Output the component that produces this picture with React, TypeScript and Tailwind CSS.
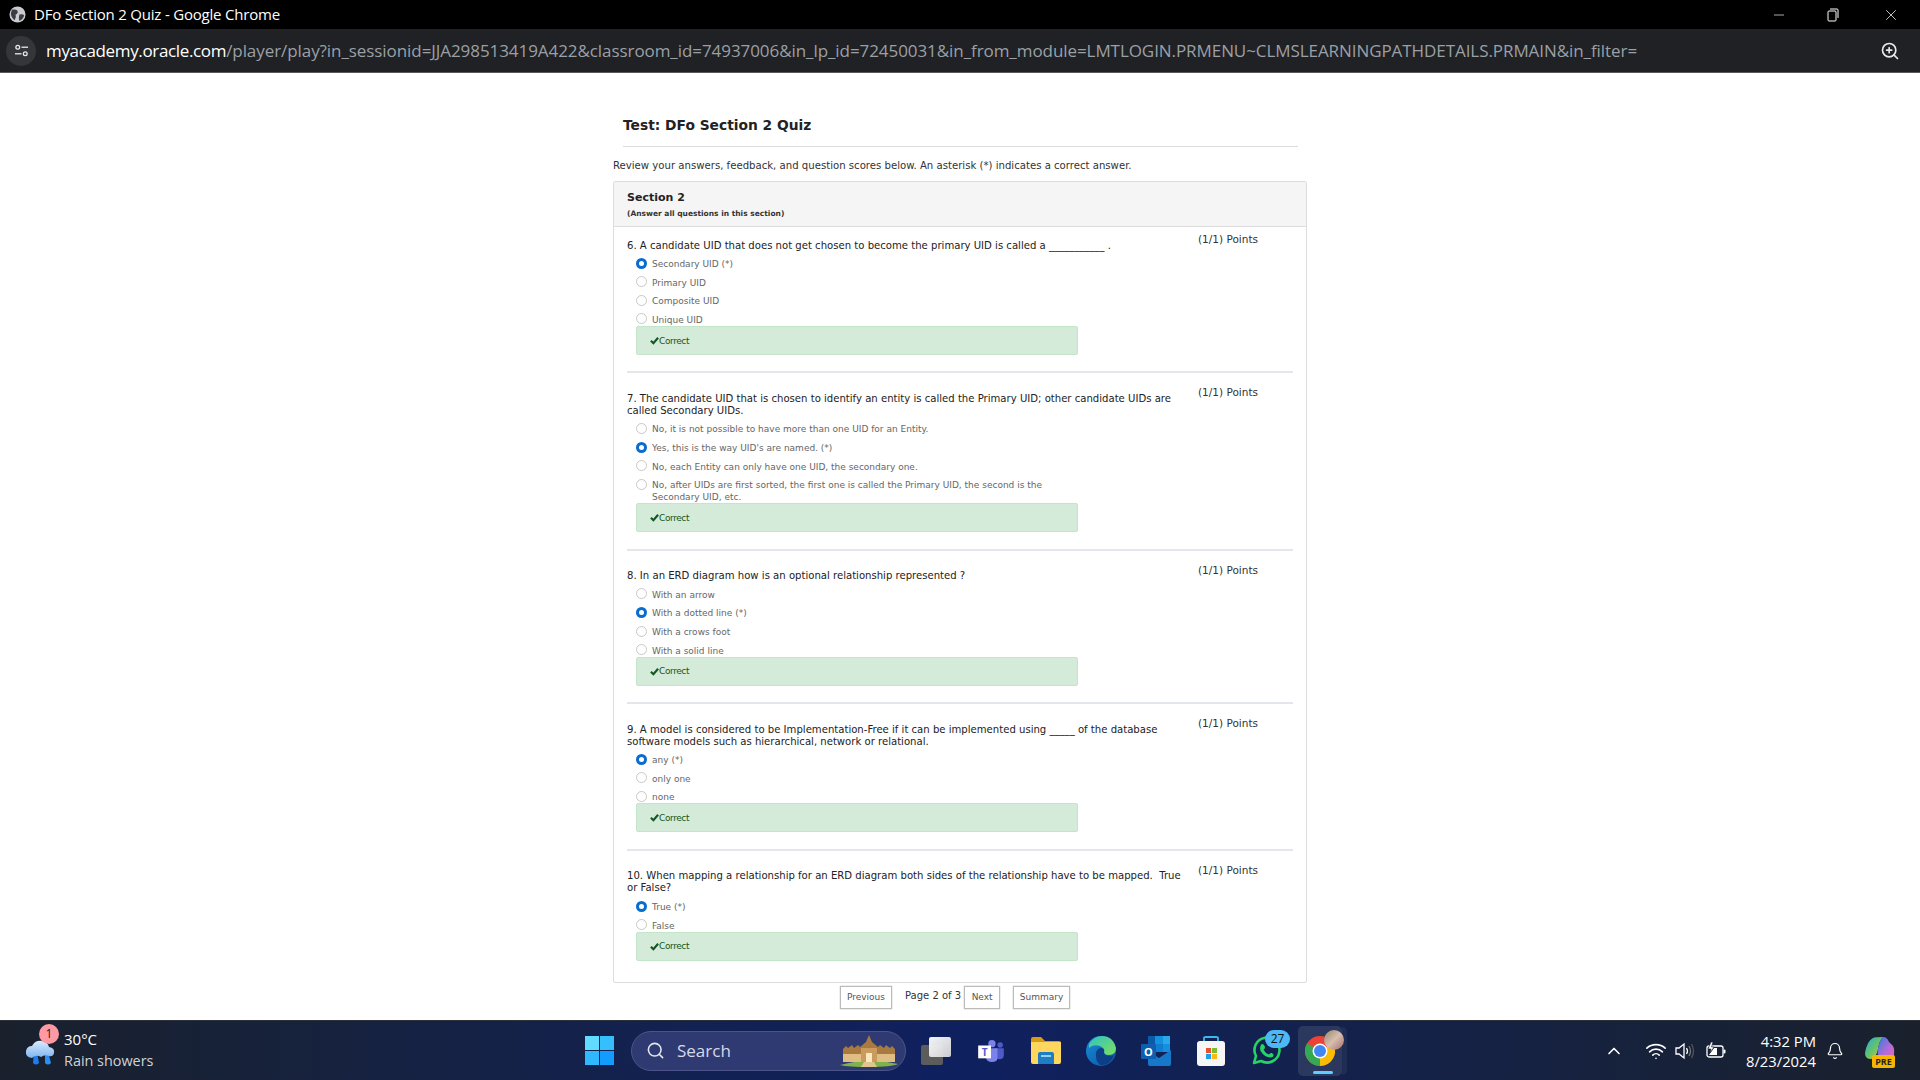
import React from 'react'
import { Search, ChevronUp, Wifi, Bell, Minus, X, ZoomIn } from 'lucide-react'

type Question = { no: number; text: string; options: { label: string; checked?: boolean }[] }

const questions: Question[] = [
  {
    no: 6,
    text: 'A candidate UID that does not get chosen to become the primary UID is called a ___________ .',
    options: [{ label: 'Secondary UID (*)', checked: true }, { label: 'Primary UID' }, { label: 'Composite UID' }, { label: 'Unique UID' }],
  },
  {
    no: 7,
    text: 'The candidate UID that is chosen to identify an entity is called the Primary UID; other candidate UIDs are called Secondary UIDs.',
    options: [
      { label: 'No, it is not possible to have more than one UID for an Entity.' },
      { label: "Yes, this is the way UID's are named. (*)", checked: true },
      { label: 'No, each Entity can only have one UID, the secondary one.' },
      { label: 'No, after UIDs are first sorted, the first one is called the Primary UID, the second is the Secondary UID, etc.' },
    ],
  },
  {
    no: 8,
    text: 'In an ERD diagram how is an optional relationship represented ?',
    options: [{ label: 'With an arrow' }, { label: 'With a dotted line (*)', checked: true }, { label: 'With a crows foot' }, { label: 'With a solid line' }],
  },
  {
    no: 9,
    text: 'A model is considered to be Implementation-Free if it can be implemented using _____ of the database software models such as hierarchical, network or relational.',
    options: [{ label: 'any (*)', checked: true }, { label: 'only one' }, { label: 'none' }],
  },
  {
    no: 10,
    text: 'When mapping a relationship for an ERD diagram both sides of the relationship have to be mapped.  True or False?',
    options: [{ label: 'True (*)', checked: true }, { label: 'False' }],
  },
]

const pageFont = "font-['DejaVu_Sans',Verdana,sans-serif]"
const winFont = "font-['Open_Sans','Noto_Sans',sans-serif]"

function Radio({ checked }: { checked?: boolean }) {
  if (checked) {
    return (
      <span className="w-[11px] h-[11px] shrink-0 rounded-full bg-[#0a6ccf] flex items-center justify-center -mt-[0.5px]">
        <span className="w-[5px] h-[5px] rounded-full bg-white" />
      </span>
    )
  }
  return <span className="w-[11px] h-[11px] shrink-0 rounded-full border border-[#c8c8c8] bg-white -mt-[0.5px]" />
}

function QuestionBlock({ q, last }: { q: Question; last: boolean }) {
  return (
    <div>
      <div className="flex">
        <div className="w-[558px] pt-[6.5px] shrink-0">
          <p className="text-[10.1px] leading-[12px] text-[#222] whitespace-pre-wrap">{q.no}. {q.text}</p>
          <div className="ml-[9px]">
            {q.options.map((o) => (
              <div key={o.label} className="flex gap-[5px] mt-[6.6px] text-[9px] leading-[12px] text-[#666]">
                <Radio checked={o.checked} />
                <span className="w-[420px]">{o.label}</span>
              </div>
            ))}
            <div className="h-[29px] w-[442px] bg-[#d4ebd9] border border-[#c3e6cb] rounded-[2px] flex items-center pl-[13px] text-[9px] text-[#155724]">
              <svg viewBox="0 0 10 10" className="w-[9px] h-[9px]">
                <path d="M1 5.2 L3.8 8 L9 2" fill="none" stroke="#155724" strokeWidth="2.4" />
              </svg>
              <span className="pt-[2px] tracking-[-0.4px]">Correct</span>
            </div>
          </div>
        </div>
        <div className="ml-[13px] text-[10.5px] leading-[12px] text-[#333]">(1/1) Points</div>
      </div>
      {!last && <div className="h-[2px] bg-[#e3e6ea] mt-[16.5px] mb-[13px]" />}
    </div>
  )
}

function WeatherIcon() {
  return (
    <div className="relative w-[30px] h-[30px]">
      <svg viewBox="0 0 30 30" className="w-[30px] h-[30px]">
        <defs>
          <linearGradient id="cloud" x1="0" y1="0" x2="0" y2="1">
            <stop offset="0" stopColor="#d8ecff" />
            <stop offset="1" stopColor="#7fb4ee" />
          </linearGradient>
        </defs>
        <path d="M9 16 L12 16 L14 27 Q11 30 8 27Z" fill="#1e7cf0" />
        <path d="M20 16 L23 16 L26 27 Q23 30 20 27Z" fill="#2a90f8" />
        <path d="M7 22 Q0 21 1 15 Q2 10 7 10 Q10 4 17 5 Q23 6 24 11 Q30 12 29 17 Q28 21 24 20 Q20 18 16 21 Q11 18 7 22Z" fill="url(#cloud)" />
      </svg>
      <span className="absolute left-[14px] top-[-12px] w-[20px] h-[20px] rounded-full bg-[#ff99a4] text-[#1b1b1b] text-[12px] flex items-center justify-center">1</span>
    </div>
  )
}

function WindowsLogo() {
  return (
    <div className="grid grid-cols-2 gap-[1px] w-[29px] h-[29px]">
      <span className="bg-[#5fdcff]" />
      <span className="bg-[#36bfff]" />
      <span className="bg-[#2fb8ff]" />
      <span className="bg-[#129cff]" />
    </div>
  )
}

function Building() {
  return (
    <svg viewBox="0 0 58 32" className="w-[58px] h-[32px]">
      <path d="M0 30 Q29 22 58 29 Q52 32 29 32 Q8 32 0 30Z" fill="#7fb24a" />
      <path d="M3 14 L6 11 L8 13 L12 10 L14 13 L18 10 L20 12 L26 7 L29 0 L32 7 L38 12 L40 10 L44 13 L46 10 L50 13 L52 11 L55 14 L55 27 L3 27Z" fill="#a97a3f" />
      <path d="M3 19 H55 V27 H3Z" fill="#e0bd85" />
      <path d="M21 13 H37 V27 H21Z" fill="#c99c5e" />
      <path d="M26 18 H32 V27 H26Z" fill="#fbe8c0" />
      <path d="M24 27 H34 L37 32 H21Z" fill="#e2c58c" />
    </svg>
  )
}

function TaskView() {
  return (
    <div className="relative w-[30px] h-[28px]">
      <span className="absolute left-0 bottom-0 w-[22px] h-[20px] rounded-[2px] bg-[#5c5c5c]" />
      <span className="absolute right-0 top-0 w-[22px] h-[20px] rounded-[2px] bg-gradient-to-br from-white to-[#d6d6d6] opacity-95" />
    </div>
  )
}

function Teams() {
  return (
    <svg viewBox="0 0 28 24" className="w-[26px] h-[22px]">
      <circle cx="15" cy="4" r="4" fill="#7b83eb" />
      <circle cx="24" cy="5.5" r="3" fill="#5059c9" />
      <path d="M18 9 H28 V17 Q28 21 23 21 Q19 21 18 18Z" fill="#5059c9" />
      <path d="M8 9 H21 V19 Q21 24 15 24 Q9 24 8 18Z" fill="#7b83eb" />
      <rect x="0" y="6" width="14" height="14" fill="#fff" />
      <text x="7" y="17" textAnchor="middle" fontSize="11" fontWeight="700" fill="#5059c9" fontFamily="Open Sans">T</text>
    </svg>
  )
}

function Folder() {
  return (
    <svg viewBox="0 0 30 27" className="w-[30px] h-[27px]">
      <path d="M0 2 Q0 0 2 0 H10 L14 4 H28 Q30 4 30 6 V12 H0Z" fill="#d99a14" />
      <path d="M0 5 H30 V25 Q30 27 28 27 H2 Q0 27 0 25Z" fill="#ffd75e" />
      <path d="M7 17 Q7 15 9 15 H21 Q23 15 23 17 V27 H7Z" fill="#1f7dc4" />
      <rect x="10" y="18" width="10" height="2" fill="#8fd0f5" />
    </svg>
  )
}

function Edge() {
  return (
    <svg viewBox="0 0 30 30" className="w-[30px] h-[30px]">
      <defs>
        <linearGradient id="edgeA" x1="0" y1="0" x2="1" y2="1">
          <stop offset="0" stopColor="#2fc2c5" />
          <stop offset="1" stopColor="#7fe05a" />
        </linearGradient>
        <linearGradient id="edgeB" x1="0" y1="0" x2="1" y2="1">
          <stop offset="0" stopColor="#1a8fd8" />
          <stop offset="1" stopColor="#0b4fa0" />
        </linearGradient>
      </defs>
      <circle cx="15" cy="15" r="15" fill="url(#edgeB)" />
      <path d="M3 8 Q8 0 16 0 Q27 0 30 12 Q30 19 23 19 Q18 19 18 16 Q19 12 14 10 Q7 8 3 12Z" fill="url(#edgeA)" />
      <path d="M10 17 Q11 12 16 12 Q19 13 18 16 Q18 20 24 20 Q27 20 28 19 Q24 30 14 29 Q9 24 10 17Z" fill="#0d3f86" />
    </svg>
  )
}

function Outlook() {
  return (
    <svg viewBox="0 0 30 30" className="w-[30px] h-[30px]">
      <rect x="7" y="0" width="22" height="16" fill="#0a5aa8" />
      <rect x="14" y="0" width="8" height="8" fill="#1490df" />
      <rect x="22" y="0" width="7" height="8" fill="#28a8ea" />
      <rect x="14" y="8" width="8" height="8" fill="#0f7dd0" />
      <rect x="22" y="8" width="7" height="8" fill="#1490df" />
      <path d="M7 15 L18 22 L30 14 V28 Q30 30 28 30 H9 Q7 30 7 28Z" fill="#1778c9" />
      <rect x="0" y="8" width="15" height="15" rx="1" fill="#0f5fb0" />
      <text x="7.5" y="20" textAnchor="middle" fontSize="11" fontWeight="700" fill="#fff" fontFamily="Open Sans">O</text>
    </svg>
  )
}

function Store() {
  return (
    <svg viewBox="0 0 30 30" className="w-[30px] h-[30px]">
      <path d="M8 6 V2 Q8 1 10 1 H20 Q22 1 22 2 V6" fill="none" stroke="#3fb6f0" strokeWidth="1.8" />
      <rect x="1" y="5" width="28" height="25" rx="3" fill="#f6f6f6" />
      <rect x="10" y="12" width="5" height="5" fill="#e8512f" />
      <rect x="16" y="12" width="5" height="5" fill="#7dbb2f" />
      <rect x="10" y="18" width="5" height="5" fill="#1ea0e8" />
      <rect x="16" y="18" width="5" height="5" fill="#fcb714" />
    </svg>
  )
}

function WhatsApp() {
  return (
    <div className="relative w-[30px] h-[30px]">
      <svg viewBox="0 0 30 30" className="w-[30px] h-[30px]">
        <path d="M3 27 L5 20 A12.5 12.5 0 1 1 10 25 Z" fill="none" stroke="#25d366" strokeWidth="2.6" strokeLinejoin="round" />
        <path d="M10 9 Q11 7 13 9 L14 11 Q14 13 12.5 13.5 Q14 17 18 18.5 Q19 16.5 21 17 L22.5 18.5 Q23 21 20 21.5 Q14 22 9.5 15 Q8.5 11 10 9Z" fill="#25d366" />
      </svg>
      <span className="absolute left-[14px] top-[-6px] w-[25px] h-[18px] rounded-full bg-[#4cb8f5] text-[#111] text-[12px] leading-[18px] text-center">27</span>
    </div>
  )
}

function Chrome() {
  return (
    <div className="flex items-center shrink-0">
      <div className="relative w-[44px] h-[50px] rounded-[5px] bg-white/10 flex items-center justify-center">
        <svg viewBox="0 0 30 30" className="w-[30px] h-[30px]">
          <circle cx="15" cy="15" r="15" fill="#ea4335" />
          <path d="M15 15 L2 7.5 A15 15 0 0 0 15 30 L15 15Z" fill="#34a853" />
          <path d="M15 15 L28 7.5 A15 15 0 0 1 15 30 L15 15Z" fill="#fbbc05" />
          <circle cx="15" cy="15" r="7.5" fill="#fff" />
          <circle cx="15" cy="15" r="6" fill="#4285f4" />
        </svg>
        <span className="absolute left-[26px] top-[4px] w-[20px] h-[20px] rounded-full bg-gradient-to-br from-[#94866c] via-[#d8bfae] to-[#a86f6f]" />
        <span className="absolute left-[15px] bottom-[2px] w-[20px] h-[3px] rounded-full bg-[#60cdff]" />
      </div>
      <div className="w-[5px] h-[48px] rounded-r-[5px] bg-white/5" />
    </div>
  )
}

function Speaker() {
  return (
    <svg viewBox="0 0 20 18" className="w-[20px] h-[18px]" fill="none" stroke="#fff" strokeWidth="1.3">
      <path d="M1 6 H4 L9 2 V16 L4 12 H1Z" />
      <path d="M11.5 6 Q13.5 9 11.5 12" />
      <path d="M14 4 Q17 9 14 14" stroke="#777" />
      <path d="M16.5 2 Q20.5 9 16.5 16" stroke="#555" />
    </svg>
  )
}

function Battery() {
  return (
    <svg viewBox="0 0 20 18" className="w-[20px] h-[18px]">
      <rect x="1" y="4" width="16" height="11" rx="2" fill="none" stroke="#fff" strokeWidth="1.3" />
      <rect x="17.5" y="7.5" width="2" height="4" rx="1" fill="#fff" />
      <path d="M3 13 L8 6 H11 V13Z" fill="#fff" />
      <path d="M5 0 L2 7 H5 L4 11 L8 5 H5.5 L7 0Z" fill="#fff" stroke="#1a202c" strokeWidth="0.6" />
    </svg>
  )
}

function Copilot() {
  return (
    <div className="relative w-[30px] h-[28px]">
      <svg viewBox="0 0 30 24" className="w-[30px] h-[24px]">
        <defs>
          <linearGradient id="copA" x1="0" y1="0" x2="1" y2="1">
            <stop offset="0" stopColor="#2aa7e0" />
            <stop offset="0.5" stopColor="#62c46a" />
            <stop offset="1" stopColor="#e9c53c" />
          </linearGradient>
          <linearGradient id="copB" x1="0" y1="0" x2="1" y2="1">
            <stop offset="0" stopColor="#2f7ce0" />
            <stop offset="0.6" stopColor="#b56bd8" />
            <stop offset="1" stopColor="#e86bb0" />
          </linearGradient>
        </defs>
        <path d="M8 1 Q10 0 18 0 Q14 4 13 12 Q11 22 6 22 Q0 22 0 16 Q2 4 8 1Z" fill="url(#copA)" />
        <path d="M18 0 Q22 0 24 5 L26 7 Q30 9 29 18 Q25 22 17 22 Q11 22 13 12 Q14 4 18 0Z" fill="url(#copB)" />
      </svg>
      <span className="absolute left-[7px] bottom-[-3px] w-[23px] h-[13px] rounded-[2px] bg-[#f7b500] text-[#222] text-[9px] font-bold leading-[13px] text-center">PRE</span>
    </div>
  )
}

export default function App() {
  return (
    <div className={`w-[1920px] h-[1080px] flex flex-col overflow-hidden bg-white ${pageFont}`}>
      {/* Title bar */}
      <div className={`h-[29px] bg-black flex items-center pl-[9px] text-white shrink-0 ${winFont}`}>
        <svg viewBox="0 0 18 18" className="w-[17px] h-[17px]">
          <circle cx="9" cy="9" r="8.5" fill="#c9cbd0" />
          <path d="M3 4 Q7 3 9 5 Q10 8 7 9 Q8 12 6 15 Q2 12 2 8Z M11 9 Q15 8 16 10 Q15 14 11 16 Q10 12 11 9Z" fill="#3a3c40" />
        </svg>
        <span className="ml-[8px] text-[15px] tracking-[-0.2px]">DFo Section 2 Quiz - Google Chrome</span>
        <div className="ml-auto flex items-center pr-[20px]">
          <Minus className="w-[16px] h-[16px]" strokeWidth={1} />
          <svg viewBox="0 0 12 14" className="ml-[40px] w-[12px] h-[14px]" fill="none" stroke="#fff" strokeWidth="1">
            <rect x="1" y="3" width="8" height="10" rx="1" />
            <path d="M3 1 H10 Q11 1 11 2 V10" />
          </svg>
          <X className="ml-[43px] w-[18px] h-[18px]" strokeWidth={1} />
        </div>
      </div>

      {/* Address bar */}
      <div className={`h-[44px] bg-[#202124] border-b border-[#5a5a5a] flex items-center pl-[6px] pr-[20px] shrink-0 ${winFont}`}>
        <div className="w-[30px] h-[30px] rounded-full bg-[#35363a] flex items-center justify-center shrink-0">
          <svg viewBox="0 0 16 16" className="w-[15px] h-[15px]" fill="none" stroke="#e8eaed" strokeWidth="1.4">
            <circle cx="4" cy="4.5" r="2" />
            <path d="M8 4.5 H15" />
            <circle cx="12" cy="11.5" r="2" />
            <path d="M1 11.5 H8" />
          </svg>
        </div>
        <div className="ml-[10px] text-[17px] whitespace-nowrap tracking-[-0.07px] text-[#9aa0a6]">
          <span className="text-white tracking-[-0.35px]">myacademy.oracle.com</span>/player/play?in_sessionid=JJA298513419A422&amp;classroom_id=74937006&amp;in_lp_id=72450031&amp;in_from_module=LMTLOGIN.PRMENU~CLMSLEARNINGPATHDETAILS.PRMAIN&amp;in_filter=
        </div>
        <ZoomIn className="ml-auto w-[20px] h-[20px] text-[#e8eaed] shrink-0" strokeWidth={2} />
      </div>

      {/* Page */}
      <div className="flex-1 min-h-0">
        <div className="w-[694px] ml-[613px]">
          <div className="pl-[10px] pr-[9px]">
            <h1 className="pt-[43px] h-[74px] text-[13.8px] leading-[18px] font-bold text-[#222] border-b border-[#ddd]">Test: DFo Section 2 Quiz</h1>
          </div>
          <p className="mt-[13px] text-[10.15px] leading-[12px] text-[#333]">Review your answers, feedback, and question scores below. An asterisk (*) indicates a correct answer.</p>
          <div className="mt-[9px] border border-[#ddd] rounded-[2px] h-[802px]">
            <div className="h-[45px] bg-[#f5f5f5] border-b border-[#ddd] pl-[13px] pt-[9px]">
              <div className="text-[11px] leading-[14px] font-bold text-[#222]">Section 2</div>
              <div className="mt-[3px] text-[7.5px] leading-[11px] font-bold text-[#333]">(Answer all questions in this section)</div>
            </div>
            <div className="px-[13px] pt-[6px]">
              {questions.map((q, i) => (
                <QuestionBlock key={q.no} q={q} last={i === questions.length - 1} />
              ))}
            </div>
          </div>
          <div className="mt-[3px] flex items-start pl-[227px] text-[9px] text-[#555]">
            <button className="h-[23px] w-[52px] border border-[#bbb] shadow-[0_0_1px_#999]">Previous</button>
            <span className="ml-[13px] mr-[3px] mt-[4px] text-[10px] leading-[12px] text-[#333]">Page 2 of 3</span>
            <button className="h-[23px] w-[36px] border border-[#bbb] shadow-[0_0_1px_#999]">Next</button>
            <button className="ml-[13px] h-[23px] w-[57px] border border-[#bbb] shadow-[0_0_1px_#999]">Summary</button>
          </div>
        </div>
      </div>

      {/* Taskbar */}
      <div className={`h-[60px] shrink-0 flex items-center text-white border-t border-[#2c3038] bg-gradient-to-r from-[#1a202c] via-[#0f2060] to-[#1a202c] ${winFont}`}>
        <div className="w-[585px] shrink-0 flex items-center pl-[25px]">
          <WeatherIcon />
          <div className="ml-[9px] -mt-[2px]">
            <div className="text-[15px] leading-[21px]">30°C</div>
            <div className="text-[14.4px] leading-[21px] text-[#d0d2d6]">Rain showers</div>
          </div>
        </div>
        <WindowsLogo />
        <div className="ml-[17px] w-[275px] h-[40px] rounded-full bg-[#2f3a72] border border-[#4a5488] flex items-center pl-[14px] pr-[7px]">
          <Search className="w-[19px] h-[19px] text-[#e4e6f0]" strokeWidth={2} />
          <span className="ml-[12px] text-[17px] text-[#d6d9e8]">Search</span>
          <div className="ml-auto"><Building /></div>
        </div>
        <div className="ml-[15px] flex items-center">
          <TaskView />
          <div className="ml-[27px]"><Teams /></div>
          <div className="ml-[27px]"><Folder /></div>
          <div className="ml-[25px]"><Edge /></div>
          <div className="ml-[25px]"><Outlook /></div>
          <div className="ml-[25px]"><Store /></div>
          <div className="ml-[25px]"><WhatsApp /></div>
          <div className="ml-[17px]"><Chrome /></div>
        </div>
        <div className="ml-auto flex items-center pr-[25px]">
          <ChevronUp className="w-[20px] h-[20px]" strokeWidth={2} />
          <Wifi className="ml-[21px] w-[22px] h-[22px]" strokeWidth={1.8} />
          <div className="ml-[8px]"><Speaker /></div>
          <div className="ml-[11px]"><Battery /></div>
          <div className="ml-[20px] text-right text-[14.8px] leading-[20px]">
            <div>4:32 PM</div>
            <div>8/23/2024</div>
          </div>
          <Bell className="ml-[10px] w-[18px] h-[18px]" strokeWidth={1.6} />
          <div className="ml-[21px]"><Copilot /></div>
        </div>
      </div>
    </div>
  )
}
